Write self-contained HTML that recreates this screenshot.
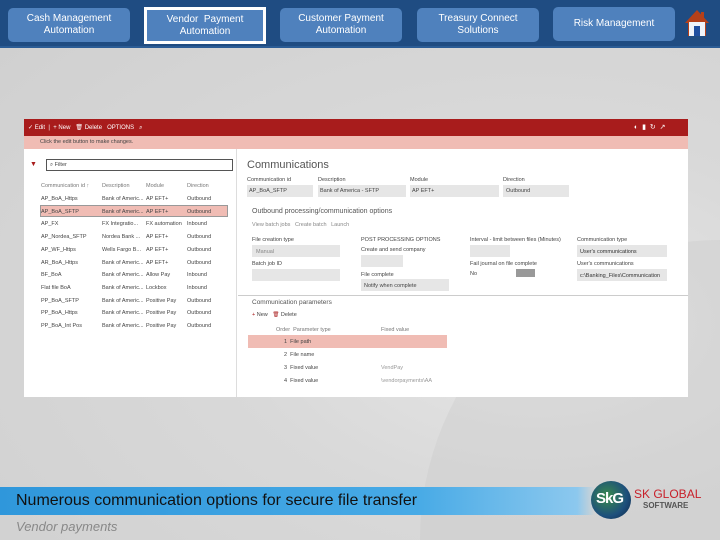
<!DOCTYPE html>
<html><head><meta charset="utf-8"><style>
*{margin:0;padding:0;box-sizing:border-box}
html{width:720px;height:540px;overflow:hidden}
body{width:720px;height:540px;overflow:hidden;position:relative;font-family:"Liberation Sans",sans-serif;background:radial-gradient(ellipse at 75% 60%,#e6e6e6 0%,#d9d9d9 40%,#cfcfcf 100%)}
.a{position:absolute}
.top{left:0;top:0;width:720px;height:48px;background:#1f4c82;border-bottom:2px solid #2b5c95}
.btn{position:absolute;top:8px;height:34px;width:122px;background:#4f81bd;border-radius:5px;color:#fff;font-size:10px;text-align:center;display:flex;align-items:center;justify-content:center;line-height:12px}
.sel{border:3px solid #fff;border-radius:0;top:7px;height:37px}
.shot{left:24px;top:119px;width:664px;height:278px;background:#fff;overflow:hidden;font-size:5.5px;color:#444}
.t{position:absolute;white-space:nowrap}
.box{position:absolute;background:#e6e6e6}
</style></head><body>
<div class="a top"></div>
<div class="btn" style="left:8px">Cash Management<br>Automation</div>
<div class="btn sel" style="left:144px">Vendor &nbsp;Payment<br>Automation</div>
<div class="btn" style="left:280px">Customer Payment<br>Automation</div>
<div class="btn" style="left:417px">Treasury Connect<br>Solutions</div>
<div class="btn" style="left:553px;top:7px">Risk Management</div>
<svg class="a" style="left:684px;top:9px" width="26" height="28" viewBox="0 0 26 28"><polygon points="13,1 1,14 4,14 4,27 22,27 22,14 25,14" fill="#b4401a"/><rect x="17" y="3" width="3" height="6" fill="#b4401a"/><rect x="5" y="13" width="16" height="14" fill="#eef3fa"/><rect x="10" y="17" width="6" height="10" fill="#1f4fa0"/></svg>

<div class="a" style="left:420px;top:240px;width:300px;height:300px;border-top-left-radius:300px;background:rgba(200,200,200,.35)"></div>

<div class="a shot">
 <div class="a" style="left:0;top:0;width:664px;height:17px;background:#a81c1c"></div>
 <div class="t" style="left:4px;top:5px;color:#fff;font-size:6px">✓ Edit &nbsp;| &nbsp;+ New &nbsp; 🗑 Delete &nbsp; OPTIONS &nbsp; ⌕</div>
 <div class="t" style="left:610px;top:4px;color:#fff;font-size:7px">◐ &nbsp;▮ &nbsp;↻ &nbsp;↗</div>
 <div class="a" style="left:0;top:17px;width:664px;height:13px;background:#f0bcb4"></div>
 <div class="t" style="left:16px;top:20px">Click the edit button to make changes.</div>
 <div class="a" style="left:212px;top:30px;width:1px;height:248px;background:#ddd"></div>
 <div class="t" style="left:6px;top:42px;color:#a81c1c;font-size:7px">▼</div>
 <div class="a" style="left:22px;top:40px;width:187px;height:12px;border:1px solid #555"></div>
 <div class="t" style="left:26px;top:43px">⌕ Filter</div>
 <div class="t" style="left:17px;top:64px;color:#777">Communication id ↑</div><div class="t" style="left:78px;top:64px;color:#777">Description</div><div class="t" style="left:122px;top:64px;color:#777">Module</div><div class="t" style="left:163px;top:64px;color:#777">Direction</div>
 <div class="a" style="left:16px;top:86px;width:188px;height:12px;background:#f0bcb4;border:1px solid #999"></div>
 <div id="rows"></div>
 <div class="t" style="left:223px;top:40px;font-size:11px;color:#555">Communications</div>
 <div class="t" style="left:223px;top:58px">Communication id</div><div class="box" style="left:223px;top:66px;width:66px;height:12px"></div><div class="t" style="left:225px;top:69px">AP_BoA_SFTP</div>
 <div class="t" style="left:294px;top:58px">Description</div><div class="box" style="left:294px;top:66px;width:88px;height:12px"></div><div class="t" style="left:296px;top:69px">Bank of America - SFTP</div>
 <div class="t" style="left:386px;top:58px">Module</div><div class="box" style="left:386px;top:66px;width:89px;height:12px"></div><div class="t" style="left:388px;top:69px">AP EFT+</div>
 <div class="t" style="left:479px;top:58px">Direction</div><div class="box" style="left:479px;top:66px;width:66px;height:12px"></div><div class="t" style="left:482px;top:69px">Outbound</div>
 <div class="t" style="left:228px;top:89px;font-size:7px;color:#555">Outbound processing/communication options</div>
 <div class="t" style="left:228px;top:103px;color:#888">View batch jobs &nbsp; Create batch &nbsp; Launch</div>
 <div class="t" style="left:228px;top:118px">File creation type</div><div class="box" style="left:228px;top:126px;width:88px;height:12px"></div><div class="t" style="left:232px;top:130px;color:#888">Manual</div>
 <div class="t" style="left:228px;top:142px">Batch job ID</div><div class="box" style="left:228px;top:150px;width:88px;height:12px"></div>
 <div class="t" style="left:337px;top:118px">POST PROCESSING OPTIONS</div><div class="t" style="left:337px;top:128px">Create and send company</div><div class="box" style="left:337px;top:136px;width:42px;height:12px"></div>
 <div class="t" style="left:337px;top:153px">File complete</div><div class="box" style="left:337px;top:160px;width:88px;height:12px"></div><div class="t" style="left:340px;top:164px">Notify when complete</div>
 <div class="t" style="left:446px;top:118px">Interval - limit between files (Minutes)</div><div class="box" style="left:446px;top:126px;width:40px;height:12px"></div>
 <div class="t" style="left:446px;top:142px">Fail journal on file complete</div><div class="t" style="left:446px;top:152px">No</div><div class="box" style="left:492px;top:150px;width:19px;height:8px;background:#999"></div>
 <div class="t" style="left:553px;top:118px">Communication type</div><div class="box" style="left:553px;top:126px;width:90px;height:12px"></div><div class="t" style="left:556px;top:130px;color:#333">User's communications</div>
 <div class="t" style="left:553px;top:142px">User's communications</div><div class="box" style="left:553px;top:150px;width:90px;height:12px"></div><div class="t" style="left:556px;top:154px;color:#333">c:\Banking_Files\Communication</div>
 <div class="a" style="left:214px;top:176px;width:450px;height:1px;background:#ccc"></div>
 <div class="t" style="left:228px;top:180px;font-size:6.5px;color:#555">Communication parameters</div>
 <div class="t" style="left:228px;top:193px"><span style="color:#a81c1c">+</span> New &nbsp; <span style="color:#a81c1c">🗑</span> Delete</div>
 <div class="t" style="left:252px;top:208px;color:#777">Order &nbsp;Parameter type</div><div class="t" style="left:357px;top:208px;color:#777">Fixed value</div>
 <div class="a" style="left:224px;top:216px;width:199px;height:13px;background:#f0bcb4"></div>
 <div class="t" style="left:260px;top:220px">1 &nbsp;File path</div>
 <div class="t" style="left:260px;top:233px">2 &nbsp;File name</div>
 <div class="t" style="left:260px;top:246px">3 &nbsp;Fixed value</div><div class="t" style="left:357px;top:246px;color:#999">VendPay</div>
 <div class="t" style="left:260px;top:259px">4 &nbsp;Fixed value</div><div class="t" style="left:357px;top:259px;color:#999">\vendorpayments\AA</div>
</div>

<div class="a" style="left:0;top:487px;width:595px;height:28px;background:linear-gradient(90deg,#2f97db,#47aae6 70%,#8cc8ee 97%,rgba(180,210,230,0))"></div>
<div class="t" style="left:16px;top:492px;font-size:16px;color:#111">Numerous communication options for secure file transfer</div>
<div class="t" style="left:16px;top:519px;font-size:13px;color:#888;font-style:italic">Vendor payments</div>
<div class="a" style="left:591px;top:481px;width:40px;height:38px;border-radius:50%;background:radial-gradient(circle at 40% 40%,#3a8c4a,#1d4f7c 60%,#0c2340)"></div>
<div class="t" style="left:596px;top:490px;font-size:15px;font-weight:bold;color:#fff;letter-spacing:-1px">SkG</div>
<div class="t" style="left:634px;top:487px;font-size:12px;color:#c8202a">SK GLOBAL</div>
<div class="t" style="left:643px;top:501px;font-size:8px;font-weight:bold;color:#555">SOFTWARE</div>
<script>
var d=[["AP_BoA_Https","Bank of Americ...","AP EFT+","Outbound"],["AP_BoA_SFTP","Bank of Americ...","AP EFT+","Outbound"],["AP_FX","FX Integratio...","FX automation","Inbound"],["AP_Nordea_SFTP","Nordea Bank ...","AP EFT+","Outbound"],["AP_WF_Https","Wells Fargo B...","AP EFT+","Outbound"],["AR_BoA_Https","Bank of Americ...","AP EFT+","Outbound"],["BF_BoA","Bank of Americ...","Allow Pay","Inbound"],["Flat file BoA","Bank of Americ...","Lockbox","Inbound"],["PP_BoA_SFTP","Bank of Americ...","Positive Pay","Outbound"],["PP_BoA_Https","Bank of Americ...","Positive Pay","Outbound"],["PP_BoA_Int Pos","Bank of Americ...","Positive Pay","Outbound"]];
var h="",x=[17,78,122,163];
d.forEach(function(r,i){r.forEach(function(c,j){h+='<div class="t" style="left:'+x[j]+'px;top:'+(77+i*12.7)+'px">'+c+'</div>'})});
document.getElementById("rows").innerHTML=h;
</script>
</body></html>
